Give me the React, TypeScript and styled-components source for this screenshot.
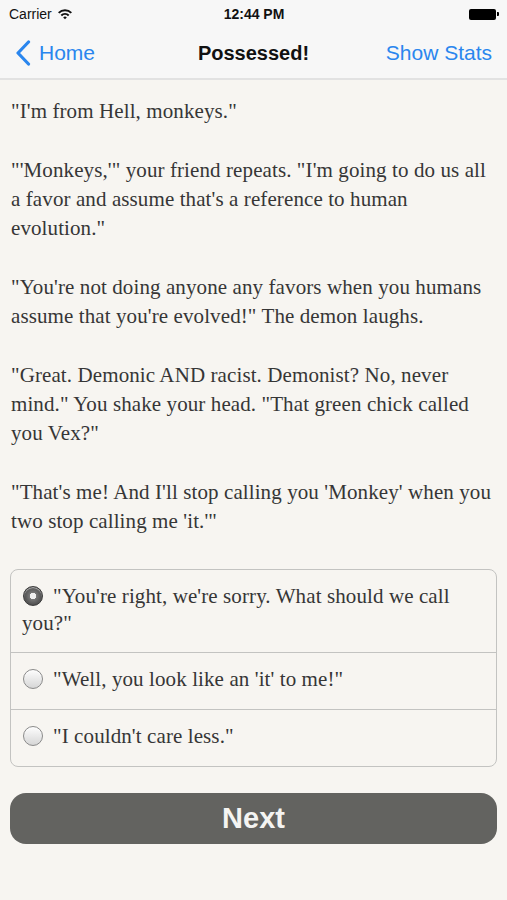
import styled, { createGlobalStyle } from "styled-components";

const GlobalStyle = createGlobalStyle`
  html, body {
    margin: 0;
    padding: 0;
    background: #f7f5f1;
  }
  * { box-sizing: border-box; }
`;

const Screen = styled.div`
  width: 507px;
  height: 900px;
  background: #f7f5f1;
  display: flex;
  flex-direction: column;
  overflow: hidden;
`;

const TopBars = styled.div`
  background: #f7f7f7;
  border-bottom: 2px solid #e2e2e2;
`;

const StatusBar = styled.div`
  height: 28px;
  padding: 0 8px 0 9px;
  display: grid;
  grid-template-columns: 1fr auto 1fr;
  align-items: center;
  font-family: "Liberation Sans", Arial, sans-serif;
  font-size: 14px;
  color: #111;
`;

const Carrier = styled.div`
  display: flex;
  align-items: center;
  gap: 5px;
`;

const Clock = styled.div`
  font-weight: bold;
`;

const Battery = styled.div`
  justify-self: end;
  display: flex;
  align-items: center;
  gap: 1px;
`;

const BatteryBody = styled.div`
  width: 27px;
  height: 11px;
  background: #000;
  border-radius: 2px;
`;

const BatteryNub = styled.div`
  width: 2px;
  height: 4px;
  background: #000;
  border-radius: 0 1px 1px 0;
`;

const NavBar = styled.div`
  height: 50px;
  padding: 0 15px 0 15px;
  display: grid;
  grid-template-columns: 1fr auto 1fr;
  align-items: center;
  font-family: "Liberation Sans", Arial, sans-serif;
  font-size: 21px;
`;

const BackButton = styled.div`
  display: flex;
  align-items: center;
  gap: 8px;
  color: #2a86ee;
`;

const Title = styled.div`
  font-weight: bold;
  font-size: 20px;
  color: #111;
`;

const RightButton = styled.div`
  justify-self: end;
  color: #2a86ee;
`;

const Story = styled.div`
  padding: 17px 11px 3px 11px;
  font-family: "Book Antiqua", Palatino, "Liberation Serif", serif;
  font-size: 21px;
  letter-spacing: 0.1px;
  line-height: 29.3px;
  color: #363636;
`;

const Paragraph = styled.p`
  margin: 0 0 29.3px 0;
`;

const Choices = styled.div`
  margin: 0 10px;
  border: 1.5px solid #c3c3c1;
  border-radius: 8px;
  overflow: hidden;
`;

const Choice = styled.div<{ $height: number }>`
  min-height: ${(p) => p.$height}px;
  padding: 13px 10px 0 11px;
  border-top: 1.5px solid #c3c3c1;
  font-family: "Book Antiqua", Palatino, "Liberation Serif", serif;
  font-size: 21px;
  letter-spacing: 0.1px;
  line-height: 27px;
  color: #363636;
  &:first-child {
    border-top: none;
  }
`;

const Radio = styled.span<{ $checked?: boolean }>`
  display: inline-block;
  width: 20px;
  height: 20px;
  margin: 0 10px 0 1px;
  vertical-align: -3px;
  border-radius: 50%;
  border: 1.5px solid ${(p) => (p.$checked ? "#3a3a3a" : "#8a8a8a")};
  background: ${(p) =>
    p.$checked
      ? "radial-gradient(circle, #f0f0f0 0 3px, #777 3.5px, #333 100%)"
      : "linear-gradient(#fdfdfd, #d6d6d6)"};
  box-shadow: inset 0 1px 1px rgba(255, 255, 255, 0.6);
`;

const NextButton = styled.div`
  margin: 26px 10px 0 10px;
  height: 51px;
  border-radius: 16px;
  background: #636360;
  display: flex;
  align-items: center;
  justify-content: center;
  font-family: "Liberation Sans", Arial, sans-serif;
  font-weight: bold;
  font-size: 29px;
  color: #f4f4f2;
`;

const WifiIcon = () => (
  <svg width="16" height="12" viewBox="0 0 16 12">
    <path d="M1 4.2a10 10 0 0 1 14 0l-1.4 1.4a8 8 0 0 0-11.2 0z" fill="#111" />
    <path d="M3.6 6.8a6.3 6.3 0 0 1 8.8 0L11 8.2a4.3 4.3 0 0 0-6 0z" fill="#111" />
    <path d="M6.2 9.4a2.5 2.5 0 0 1 3.6 0L8 11.3z" fill="#111" />
  </svg>
);

const ChevronLeft = () => (
  <svg width="16" height="26" viewBox="0 0 16 26">
    <path d="M13.5 2L3 13l10.5 11" stroke="#2a86ee" strokeWidth="3.2" fill="none" strokeLinecap="round" strokeLinejoin="round" />
  </svg>
);

const paragraphs = [
  `"I'm from Hell, monkeys."`,
  `"'Monkeys,'" your friend repeats. "I'm going to do us all a favor and assume that's a reference to human evolution."`,
  `"You're not doing anyone any favors when you humans assume that you're evolved!" The demon laughs.`,
  `"Great. Demonic AND racist. Demonist? No, never mind." You shake your head. "That green chick called you Vex?"`,
  `"That's me! And I'll stop calling you 'Monkey' when you two stop calling me 'it.'"`,
];

const options = [
  { text: `"You're right, we're sorry. What should we call you?"`, height: 82, checked: true },
  { text: `"Well, you look like an 'it' to me!"`, height: 57, checked: false },
  { text: `"I couldn't care less."`, height: 57, checked: false },
];

export default function App() {
  return (
    <Screen>
      <GlobalStyle />
      <TopBars>
        <StatusBar>
          <Carrier>
            Carrier <WifiIcon />
          </Carrier>
          <Clock>12:44 PM</Clock>
          <Battery>
            <BatteryBody />
            <BatteryNub />
          </Battery>
        </StatusBar>
        <NavBar>
          <BackButton>
            <ChevronLeft /> Home
          </BackButton>
          <Title>Possessed!</Title>
          <RightButton>Show Stats</RightButton>
        </NavBar>
      </TopBars>
      <Story>
        {paragraphs.map((p, i) => (
          <Paragraph key={i}>{p}</Paragraph>
        ))}
      </Story>
      <Choices>
        {options.map((o, i) => (
          <Choice key={i} $height={o.height}>
            <Radio $checked={o.checked} />
            {o.text}
          </Choice>
        ))}
      </Choices>
      <NextButton>Next</NextButton>
    </Screen>
  );
}
